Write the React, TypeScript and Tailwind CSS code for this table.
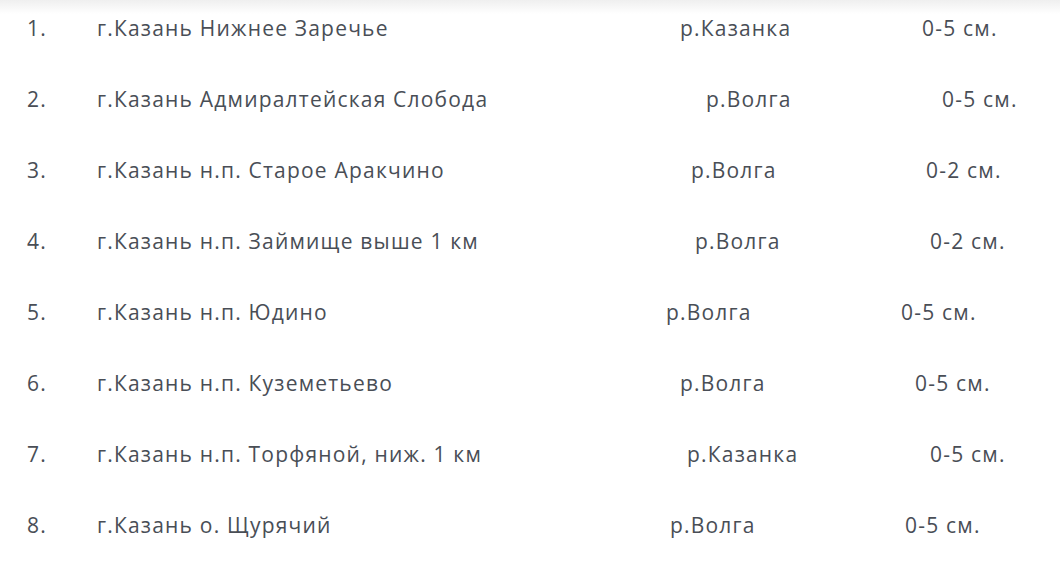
const rows = [
  { n: "1.", name: "г.Казань Нижнее Заречье", river: "р.Казанка", depth: "0-5 см.", nameW: "w-[583px]", riverW: "w-[242px]" },
  { n: "2.", name: "г.Казань Адмиралтейская Слобода", river: "р.Волга", depth: "0-5 см.", nameW: "w-[609px]", riverW: "w-[236px]" },
  { n: "3.", name: "г.Казань н.п. Старое Аракчино", river: "р.Волга", depth: "0-2 см.", nameW: "w-[594px]", riverW: "w-[235px]" },
  { n: "4.", name: "г.Казань н.п. Займище выше 1 км", river: "р.Волга", depth: "0-2 см.", nameW: "w-[598px]", riverW: "w-[235px]" },
  { n: "5.", name: "г.Казань н.п. Юдино", river: "р.Волга", depth: "0-5 см.", nameW: "w-[569px]", riverW: "w-[235px]" },
  { n: "6.", name: "г.Казань н.п. Куземетьево", river: "р.Волга", depth: "0-5 см.", nameW: "w-[583px]", riverW: "w-[235px]" },
  { n: "7.", name: "г.Казань н.п. Торфяной, ниж. 1 км", river: "р.Казанка", depth: "0-5 см.", nameW: "w-[590px]", riverW: "w-[243px]" },
  { n: "8.", name: "г.Казань о. Щурячий", river: "р.Волга", depth: "0-5 см.", nameW: "w-[573px]", riverW: "w-[235px]" },
];

export default function App() {
  return (
    <div className="w-[1060px] h-[579px] bg-white overflow-hidden font-['Open_Sans',sans-serif] text-[21px] tracking-[1.2px] text-[#494e56]">
      <div className="h-[14px] bg-gradient-to-b from-[#efefef] to-white" />
      <div className="flex flex-col gap-[31px] -mt-[5px] pl-[27px]">
        {rows.map((r) => (
          <div key={r.n} className="flex items-center h-10 whitespace-nowrap">
            <span className="w-[70px]">{r.n}</span>
            <span className={r.nameW}>{r.name}</span>
            <span className={r.riverW}>{r.river}</span>
            <span>{r.depth}</span>
          </div>
        ))}
      </div>
    </div>
  );
}
